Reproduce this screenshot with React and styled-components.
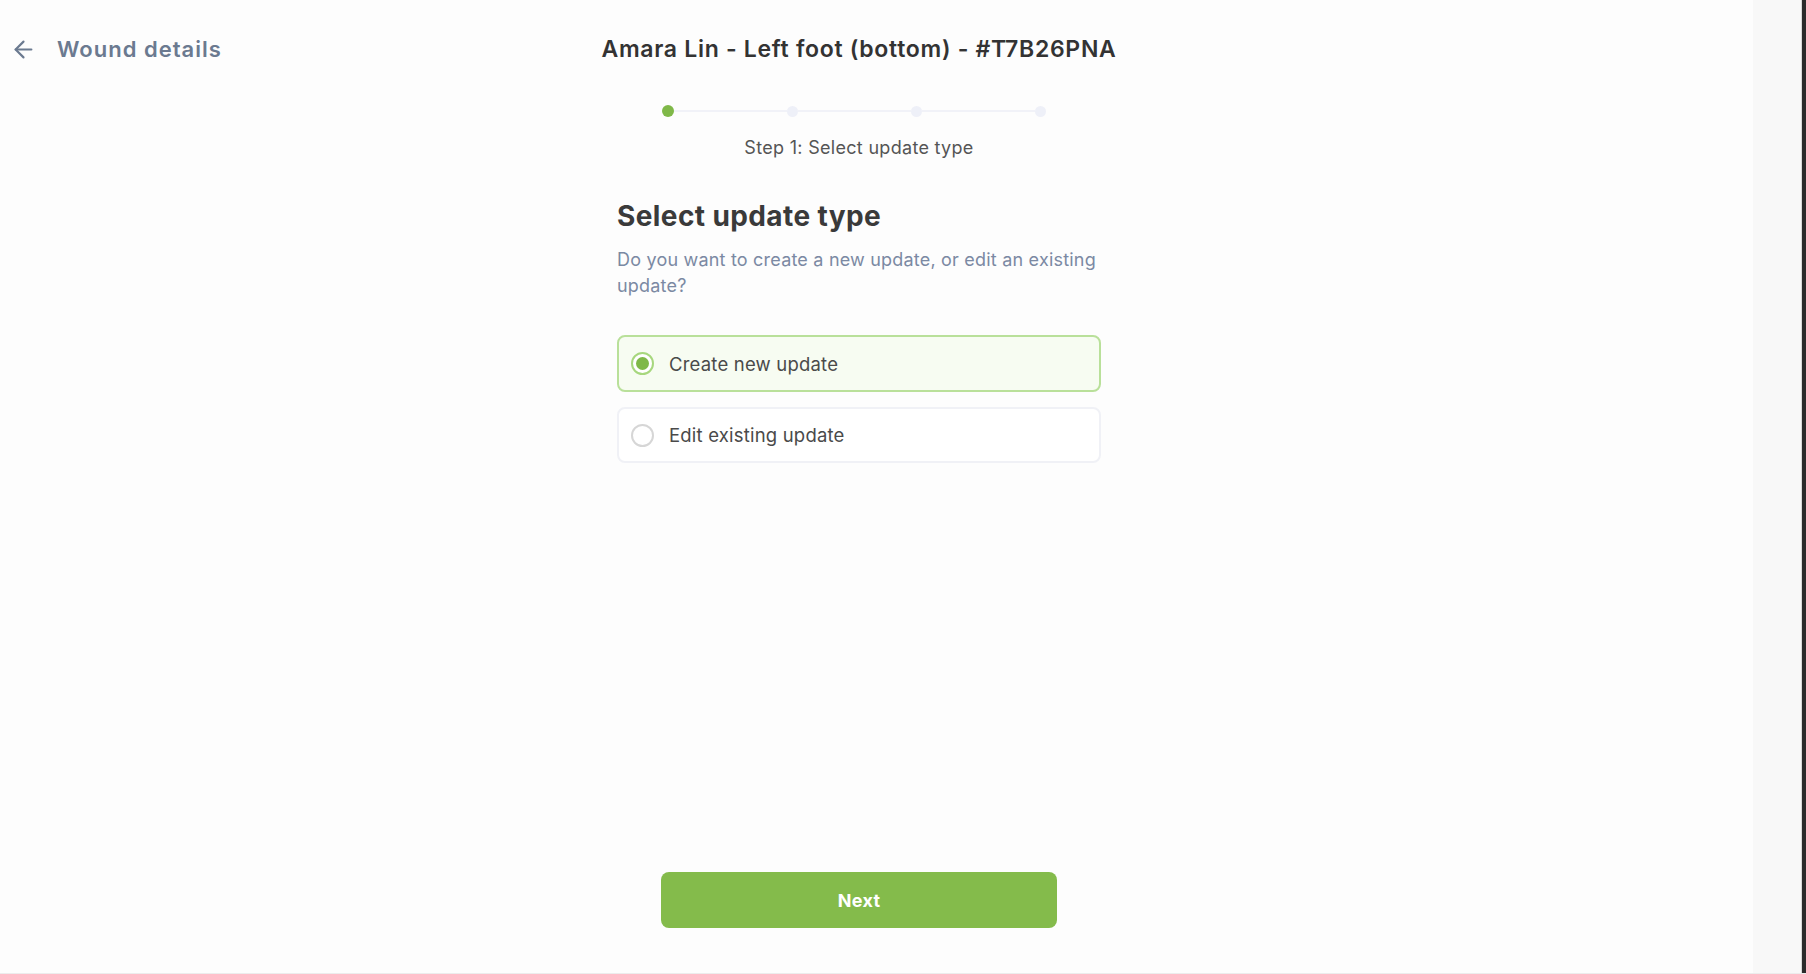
import React, { useState } from 'react';
import styled, { createGlobalStyle } from 'styled-components';
import { ArrowLeft } from 'lucide-react';

const GlobalStyle = createGlobalStyle`
  html, body {
    margin: 0;
    padding: 0;
    background: #ffffff;
  }
  body {
    font-family: Inter, "Noto Sans", "Liberation Sans", sans-serif;
    -webkit-font-smoothing: antialiased;
  }
  * {
    box-sizing: border-box;
  }
`;

const Frame = styled.div`
  display: flex;
  width: 1806px;
  height: 974px;
  overflow: hidden;
  border-bottom: 1px solid #ececec;
`;

const Main = styled.main`
  flex: 1;
  display: flex;
  flex-direction: column;
  align-items: center;
  padding-right: 35px;
  background: #fdfdfd;
`;

const SidePanel = styled.aside`
  width: 49px;
  background: #f8f8f8;
  border-right: 1px solid #d8d8d8;
`;

const Edge = styled.div`
  width: 4px;
  background: #2b2b2b;
`;

const Header = styled.header`
  align-self: stretch;
  display: grid;
  grid-template-columns: 1fr auto 1fr;
  align-items: center;
  height: 56px;
  margin-top: 21px;
`;

const BackLink = styled.a`
  display: flex;
  align-items: center;
  gap: 20px;
  padding-left: 10px;
  color: #6b7a90;
  font-size: 22px;
  font-weight: 600;
  letter-spacing: 1px;
  text-decoration: none;
  cursor: pointer;
`;

const Title = styled.h1`
  margin: 0;
  color: #333333;
  font-size: 23px;
  font-weight: 600;
  letter-spacing: 0.7px;
`;

const Stepper = styled.div`
  display: flex;
  align-items: center;
  width: 484px;
  padding: 0 55px 0 45px;
  margin-top: 28px;
`;

const Dot = styled.span`
  width: ${p => (p.$active ? 12 : 11)}px;
  height: ${p => (p.$active ? 12 : 11)}px;
  border-radius: 50%;
  flex-shrink: 0;
  background: ${p => (p.$active ? '#7fb848' : '#eef0f8')};
`;

const Line = styled.span`
  flex: 1;
  height: 2px;
  background: #f1f2f8;
`;

const StepLabel = styled.div`
  margin-top: 20px;
  color: #555555;
  font-size: 18px;
  letter-spacing: 0.3px;
`;

const Content = styled.section`
  width: 484px;
  margin-top: 41px;
`;

const Heading = styled.h2`
  margin: 0;
  color: #3a3a3a;
  font-size: 28px;
  font-weight: 700;
  letter-spacing: 0.4px;
`;

const Description = styled.p`
  margin: 14px 0 0;
  color: #7b89a3;
  font-size: 18px;
  line-height: 26px;
  letter-spacing: 0.2px;
`;

const Options = styled.div`
  display: flex;
  flex-direction: column;
  gap: 15px;
  margin-top: 36px;
`;

const Option = styled.label`
  display: flex;
  align-items: center;
  gap: 15px;
  height: ${p => (p.$selected ? 57 : 56)}px;
  padding: 0 12px;
  border-radius: 8px;
  border: 2px solid ${p => (p.$selected ? '#b9e09a' : '#f0f1f6')};
  background: ${p => (p.$selected ? '#f7fcf2' : '#ffffff')};
  cursor: pointer;
`;

const Radio = styled.span`
  width: 23px;
  height: 23px;
  border-radius: 50%;
  flex-shrink: 0;
  display: flex;
  align-items: center;
  justify-content: center;
  border: 2px solid ${p => (p.$checked ? '#a7d77e' : '#d6d6d6')};
  background: #ffffff;

  &::after {
    content: '';
    width: 13px;
    height: 13px;
    border-radius: 50%;
    background: ${p => (p.$checked ? '#7fb848' : 'transparent')};
  }
`;

const OptionText = styled.span`
  color: #4a4a4a;
  font-size: 18.5px;
  letter-spacing: 0.2px;
`;

const Spacer = styled.div`
  flex: 1;
`;

const NextButton = styled.button`
  width: 396px;
  height: 56px;
  margin-bottom: 45px;
  border: 0;
  border-radius: 8px;
  background: #84bb4b;
  color: #ffffff;
  font-family: inherit;
  font-size: 18px;
  font-weight: 700;
  letter-spacing: 0.3px;
  cursor: pointer;
`;

const options = [
  { id: 'create', label: 'Create new update' },
  { id: 'edit', label: 'Edit existing update' },
];

export default function App() {
  const [selected, setSelected] = useState('create');

  return (
    <>
      <GlobalStyle />
      <Frame>
        <Main>
          <Header>
            <BackLink>
              <ArrowLeft size={27} strokeWidth={1.9} />
              Wound details
            </BackLink>
            <Title>Amara Lin - Left foot (bottom) - #T7B26PNA</Title>
            <div />
          </Header>

          <Stepper>
            <Dot $active />
            <Line />
            <Dot />
            <Line />
            <Dot />
            <Line />
            <Dot />
          </Stepper>
          <StepLabel>Step 1: Select update type</StepLabel>

          <Content>
            <Heading>Select update type</Heading>
            <Description>
              Do you want to create a new update, or edit an existing update?
            </Description>
            <Options>
              {options.map(o => (
                <Option
                  key={o.id}
                  $selected={selected === o.id}
                  onClick={() => setSelected(o.id)}
                >
                  <Radio $checked={selected === o.id} />
                  <OptionText>{o.label}</OptionText>
                </Option>
              ))}
            </Options>
          </Content>

          <Spacer />
          <NextButton>Next</NextButton>
        </Main>
        <SidePanel />
        <Edge />
      </Frame>
    </>
  );
}
